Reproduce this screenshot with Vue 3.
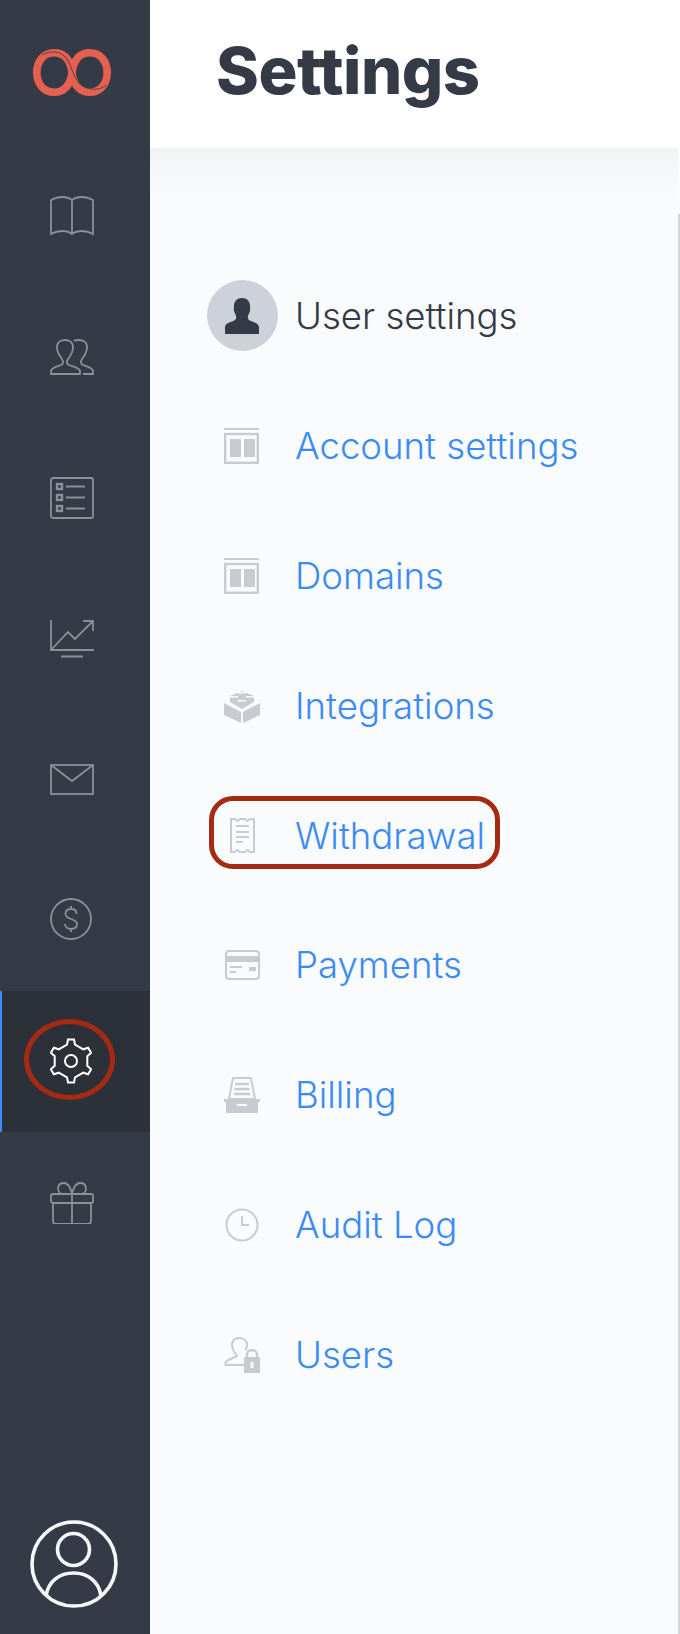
<template>
  <div class="page">
    <aside class="sidebar">
      <div class="logo">
        <svg width="78" height="47" viewBox="0 0 78 47" fill="none">
          <path d="M39 23.500C37 9 30 3.800 21 3.800C10.500 3.800 3.800 12.500 3.800 23.500C3.800 34.500 10.500 43.200 21 43.200C30 43.200 37 38 39 23.500C41 9 48 3.800 57 3.800C67.500 3.800 74.200 12.500 74.200 23.500C74.200 34.500 67.500 43.200 57 43.200C48 43.200 41 38 39 23.500Z" stroke="#e5604f" stroke-width="7.600" />
          <path d="M9 6C16 1.500 28 1 34 10C38 16 40 26 45 33C52 41 66 43 73 36" stroke="#343a46" stroke-width="0.8" />
        </svg>
      </div>
      <nav class="nav">
        <a v-for="item in navItems" :key="item.name" class="nav-item" :class="{ active: item.active }">
          <svg :width="item.w" :height="item.h" :viewBox="`0 0 ${item.w} ${item.h}`" fill="none" stroke="currentColor" stroke-width="1.8" v-html="item.svg"></svg>
          <span v-if="item.active" class="gear-mark"></span>
        </a>
      </nav>
      <div class="avatar">
        <svg width="88" height="88" viewBox="0 0 88 88" fill="none" stroke="#f7f8fa" stroke-width="3.6">
          <circle cx="44" cy="44" r="42" />
          <circle cx="43.5" cy="29.5" r="16" />
          <path d="M16 76C18 61 30 53 43.5 53C57 53 69 61 71 76" />
        </svg>
      </div>
    </aside>

    <main class="main">
      <header class="header">
        <h1>Settings</h1>
      </header>
      <div class="content">
        <ul class="menu">
          <li class="row heading">
            <span class="row-inner">
              <span class="icon-cell">
                <span class="user-badge">
                  <svg width="36" height="36" viewBox="0 0 36 36" fill="#343a46">
                    <path d="M18 0C23 0 26 3.500 26 8C26 10 26.500 11 26 13C25.500 15 24.500 16 24 18C23.500 19.500 24 21 25 22C28 24 35 25 35 29V36H1V29C1 25 8 24 11 22C12 21 12.500 19.500 12 18C11.500 16 10.500 15 10 13C9.500 11 10 10 10 8C10 3.500 13 0 18 0Z" />
                  </svg>
                </span>
              </span>
              <span class="label">User settings</span>
            </span>
          </li>
          <li v-for="link in links" :key="link.name" class="row">
            <a class="row-inner" :class="{ marked: link.marked }">
              <span class="icon-cell">
                <svg :width="link.w" :height="link.h" :viewBox="`0 0 ${link.w} ${link.h}`" fill="none" stroke="#c8ccd2" stroke-width="2" v-html="link.svg"></svg>
              </span>
              <span class="label">{{ link.name }}</span>
            </a>
          </li>
        </ul>
      </div>
    </main>
  </div>
</template>

<script setup>
// gear outline with six teeth, worked out from the angles
const gearPath = () => {
  const cx = 21
  const cy = 23
  const parts = []
  for (let i = 0; i < 6; i++) {
    const a = (-90 + i * 60) * Math.PI / 180
    const pt = (r, off) => {
      const x = cx + r * Math.cos(a) - off * Math.sin(a)
      const y = cy + r * Math.sin(a) + off * Math.cos(a)
      return `${x.toFixed(1)} ${y.toFixed(1)}`
    }
    parts.push(`${i === 0 ? 'M' : 'L'}${pt(16.5, -4)}`)
    parts.push(`L${pt(21.5, -3)}`)
    parts.push(`L${pt(21.5, 3)}`)
    parts.push(`L${pt(16.5, 4)}`)
  }
  return parts.join('') + 'Z'
}

const navItems = [
  {
    name: 'book', w: 44, h: 40,
    svg: '<path d="M1 38V4C8 0 17 0 22 4C27 0 36 0 43 4V38C36 34 27 34 22 38C17 34 8 34 1 38ZM22 4V38"/>'
  },
  {
    name: 'people', w: 44, h: 36,
    svg: '<path d="M1 35V32C1 29 6 28 11 26C13 25 14 23 12 20C8 15 7 11 7 8C7 3 11 1 15 1C19 1 23 3 23 8C23 11 22 15 18 20C16 23 17 25 19 26C24 28 30 29 30 32V35Z"/><path d="M24 2C25 1 27 1 29 1C33 1 37 3 37 8C37 11 36 15 32 20C30 23 31 25 33 26C38 28 43 29 43 32V35H33"/>'
  },
  {
    name: 'list', w: 44, h: 42,
    svg: '<rect x="1" y="1" width="42" height="40" rx="2"/><g stroke-width="2.400"><rect x="7" y="7" width="5" height="5"/><rect x="7" y="18" width="5" height="5"/><rect x="7" y="29" width="5" height="5"/></g><path d="M16 9.500H35M16 20.500H35M16 31.500H35"/>'
  },
  {
    name: 'chart', w: 44, h: 38,
    svg: '<path d="M1 0V30H44M1 30L18 12L25 19L43 1M33 1H43V11M11 36.500H33"/>'
  },
  {
    name: 'mail', w: 44, h: 31,
    svg: '<rect x="1" y="1" width="42" height="29"/><path d="M1 1L22 17L43 1"/>'
  },
  {
    name: 'money', w: 42, h: 46,
    svg: '<circle cx="21" cy="21" r="20"/><path d="M26.500 16C26.500 12.500 24 11 21 11C17.500 11 15.500 13 15.500 16C15.500 19 18 20 21 21C24 22 27 23 27 26C27 29 25 31 21 31C17.500 31 15 29 15 26M21 8V11M21 31V34"/>'
  },
  {
    name: 'settings', w: 42, h: 48, active: true,
    svg: `<path d="${gearPath()}" stroke-width="2"/><circle cx="21" cy="23" r="6" stroke-width="2"/>`
  },
  {
    name: 'gift', w: 44, h: 42,
    svg: '<rect x="1" y="12" width="42" height="9" rx="2"/><path d="M3 21V39C3 41 4 42 6 42H38C40 42 41 41 41 39V21M22 12V42M22 12H12C7 11 6 1 14 1C18 1 21 6 22 12C23 6 26 1 30 1C38 1 37 11 32 12H22"/>'
  }
]

const layoutIcon = '<path d="M0 1H35" stroke-width="2"/><rect x="1.200" y="6" width="32.600" height="28.800" stroke-width="2.400"/><path d="M6 11H17V29H6ZM20 11H31V29H20Z" fill="#c8ccd2" stroke="none"/>'

const links = [
  { name: 'Account settings', w: 36, h: 36, svg: layoutIcon },
  { name: 'Domains', w: 36, h: 36, svg: layoutIcon },
  {
    name: 'Integrations', w: 36, h: 34,
    svg: '<g fill="#c8ccd2" stroke="none"><path d="M0 14L17 23V34L0 26ZM36 14L19 23V34L36 26Z"/><path d="M6 7L18 2L30 7V13L18 20L6 13Z"/></g><g fill="#fafbfd" stroke="none"><rect x="6" y="7" width="8" height="1.500"/><rect x="22" y="7" width="8" height="1.500"/><rect x="14" y="11" width="8" height="1.500"/><rect x="14" y="3" width="8" height="1.500"/></g>'
  },
  {
    name: 'Withdrawal', w: 25, h: 35, marked: true,
    svg: '<path d="M1 1H5L7.500 3L10 1H15L17.500 3L20 1H24V34H20L17.500 32L15 34H10L7.500 32L5 34H1Z"/><path d="M6 8H19M6 14H19M6 19H19M6 24H13" stroke-width="1.800"/>'
  },
  {
    name: 'Payments', w: 35, h: 30,
    svg: '<rect x="1" y="1" width="33" height="28" rx="3"/><path d="M1 6H34V12H1Z" fill="#c8ccd2" stroke="none"/><path d="M5 17H17M5 22H11" stroke-width="2"/><path d="M24 17H31V21H24Z" fill="#c8ccd2" stroke="none"/>'
  },
  {
    name: 'Billing', w: 36, h: 36,
    svg: '<path d="M9 1H27L31 22H5Z" stroke-width="2"/><path d="M11 7H25M10.500 12H25.500M10 17H26" stroke-width="2.400"/><path d="M0 22H36V25H34V36H2V25H0ZM13 27V29H23V27Z" fill="#c8ccd2" stroke="none" fill-rule="evenodd"/>'
  },
  {
    name: 'Audit Log', w: 34, h: 34,
    svg: '<circle cx="17" cy="17" r="15.500"/><path d="M17 8V17H24"/>'
  },
  {
    name: 'Users', w: 36, h: 36,
    svg: '<path d="M21 28H1.500V26C1.500 23 10 21 13 19C10 15 8 12 8 8C8 3.500 11 1 15 1C19.500 1 23 3.500 23 8C23 10 22.500 11.500 21.500 13"/><path d="M20 20H36V36H20Z" fill="#c8ccd2" stroke="none"/><path d="M23 20V17C23 12 33 12 33 17V20" stroke-width="2.400"/><rect x="26.500" y="25" width="3" height="6" fill="#fafbfd" stroke="none"/>'
  }
]
</script>

<style scoped>
.page {
  display: flex;
  width: 680px;
  height: 1634px;
  overflow: hidden;
  background: #fafbfd;
  font-family: Inter, "Liberation Sans", sans-serif;
}

.sidebar {
  width: 150px;
  flex-shrink: 0;
  display: flex;
  flex-direction: column;
  background: #343a46;
}

.logo {
  height: 145px;
  display: flex;
  align-items: center;
  justify-content: center;
  padding-right: 6px;
  box-sizing: border-box;
}

.nav {
  display: flex;
  flex-direction: column;
}

.nav-item {
  position: relative;
  height: 141px;
  display: flex;
  align-items: center;
  padding-left: 50px;
  color: #8c9098;
}

.nav-item.active {
  background: #2b3039;
  color: #fff;
  box-shadow: inset 2px 0 0 #3b8bff;
}

/* red ring drawn over the active item */
.gear-mark {
  position: absolute;
  left: 24px;
  top: 28px;
  width: 91px;
  height: 81px;
  box-sizing: border-box;
  border: 5px solid #a52a14;
  border-radius: 50%;
}

.avatar {
  margin-top: auto;
  padding: 0 0 26px 30px;
  line-height: 0;
}

.main {
  flex: 1;
  min-width: 0;
  display: flex;
  flex-direction: column;
}

.header {
  height: 148px;
  flex-shrink: 0;
  display: flex;
  align-items: center;
  padding-left: 66px;
  box-sizing: border-box;
  background: #fff;
}

h1 {
  margin: 0;
  font-size: 65px;
  font-weight: 800;
  letter-spacing: -0.5px;
  color: #343a46;
  position: relative;
  top: -4px;
}

.content {
  flex: 1;
  position: relative;
  padding: 103px 0 0 56px;
  background: linear-gradient(#f3f4f6, #fafbfd 60px) no-repeat;
  border-right: 2px solid transparent;
}

/* scrollbar track at the right edge */
.content::after {
  content: "";
  position: absolute;
  top: 66px;
  right: -2px;
  bottom: 0;
  width: 2px;
  background: #d4d6da;
}

.menu {
  list-style: none;
  margin: 0;
  padding: 0;
}

.row {
  height: 129.9px;
  display: flex;
  align-items: center;
}

.row-inner {
  position: relative;
  display: flex;
  align-items: center;
  gap: 17px;
}

.row-inner.marked::after {
  content: "";
  position: absolute;
  left: 3px;
  right: -15px;
  top: -18px;
  bottom: -11px;
  border: 5px solid #a52a14;
  border-radius: 24px;
  pointer-events: none;
}

.icon-cell {
  width: 72px;
  display: flex;
  align-items: center;
  justify-content: center;
}

.user-badge {
  width: 71px;
  height: 71px;
  border-radius: 50%;
  background: #cdd1d9;
  display: flex;
  align-items: center;
  justify-content: center;
}

.label {
  font-size: 36.6px;
  font-weight: 300;
  color: #3b8bf5;
  line-height: 44px;
}

.heading .label {
  color: #343a46;
}
</style>
